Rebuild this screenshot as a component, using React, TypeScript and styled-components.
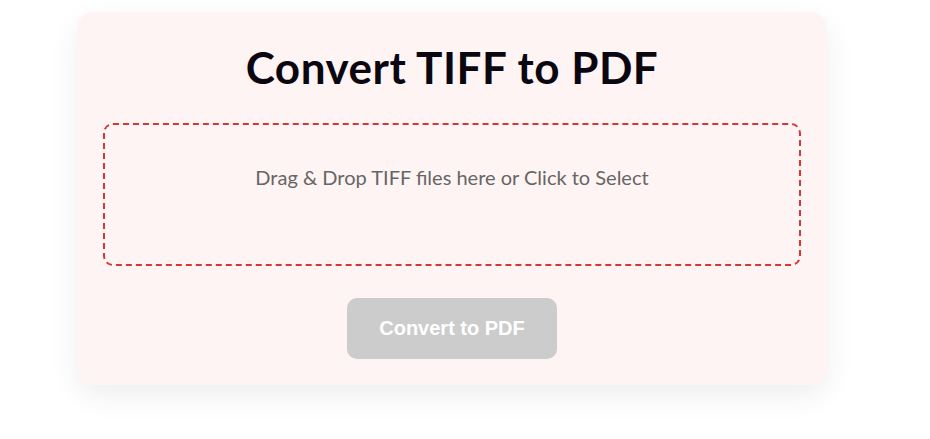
import React from 'react'
import styled, { createGlobalStyle } from 'styled-components'

const GlobalStyle = createGlobalStyle`
  html, body {
    margin: 0;
    padding: 0;
    background: #ffffff;
  }
  body {
    font-family: 'Lato', 'Liberation Sans', sans-serif;
  }
`

const Page = styled.div`
  display: flex;
  padding: 12px 0 40px 77px;
`

const Card = styled.div`
  width: 750px;
  box-sizing: border-box;
  padding: 25px 26px 26px;
  background: #fff4f4;
  border-radius: 16px;
  box-shadow: 0 10px 30px rgba(0, 0, 0, 0.07);
  display: flex;
  flex-direction: column;
  align-items: center;
`

const Title = styled.h1`
  margin: 0 0 26px;
  font-family: 'Lato', sans-serif;
  font-weight: 700;
  font-size: 44px;
  line-height: 60px;
  color: #0b0710;
  letter-spacing: 0.5px;
`

const DropZone = styled.div`
  width: 100%;
  height: 143px;
  box-sizing: border-box;
  border: 2px dashed #d63638;
  border-radius: 10px;
  padding: 37px 20px 0;
  text-align: center;
  cursor: pointer;
`

const DropText = styled.p`
  margin: 0;
  font-family: 'Lato', sans-serif;
  font-size: 20px;
  line-height: 30px;
  color: #666666;
`

const ConvertButton = styled.button`
  margin-top: 32px;
  padding: 0 32px;
  height: 61px;
  border: none;
  border-radius: 10px;
  background: #cccccc;
  color: #ffffff;
  font-family: 'Liberation Sans', Arial, sans-serif;
  font-weight: 700;
  font-size: 20px;
  cursor: not-allowed;
`

const App = () => {
  return (
    <>
      <GlobalStyle />
      <Page>
        <Card>
          <Title>Convert TIFF to PDF</Title>
          <DropZone>
            <DropText>Drag &amp; Drop TIFF files here or Click to Select</DropText>
          </DropZone>
          <ConvertButton disabled>Convert to PDF</ConvertButton>
        </Card>
      </Page>
    </>
  )
}

export default App
